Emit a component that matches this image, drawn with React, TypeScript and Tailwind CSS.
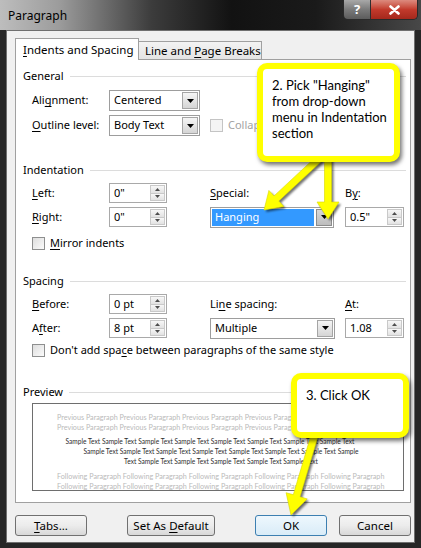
import React from "react";

function U({ c }: { c: string }) {
  return <span className="underline decoration-1 underline-offset-[2px]">{c}</span>;
}

function DownTri({ color = "#000" }: { color?: string }) {
  return (
    <svg width="7" height="4" viewBox="0 0 7 4">
      <polygon points="0,0 7,0 3.5,4" fill={color} />
    </svg>
  );
}

function SmallTri({ up }: { up?: boolean }) {
  return (
    <svg width="5" height="3" viewBox="0 0 5 3">
      <polygon points={up ? "0,3 5,3 2.5,0" : "0,0 5,0 2.5,3"} fill="#4d4d4d" />
    </svg>
  );
}

function Select({ value, w, highlighted }: { value: string; w: string; highlighted?: boolean }) {
  return (
    <div className={`flex h-[21px] items-stretch border border-[#9d9d9d] bg-white ${w}`}>
      {highlighted ? (
        <div className="m-[1px] flex flex-1 items-center bg-[#3399ff] pl-[3px] text-white">{value}</div>
      ) : (
        <div className="flex flex-1 items-center pl-[4px]">{value}</div>
      )}
      <div
        className={`m-[1px] flex w-[16px] items-center justify-center border ${
          highlighted
            ? "border-[#8c8c8c] bg-gradient-to-b from-[#d8d8d8] to-[#bdbdbd]"
            : "border-[#a5a5a5] bg-gradient-to-b from-[#f5f5f5] to-[#d5d5d5]"
        }`}
      >
        <DownTri />
      </div>
    </div>
  );
}

function Spin({ value, w }: { value: string; w: string }) {
  return (
    <div className={`flex h-[20px] items-stretch border border-[#a9a9a9] bg-white ${w}`}>
      <div className="flex flex-1 items-center pl-[4px]">{value}</div>
      <div className="my-[1px] mr-[1px] flex w-[15px] flex-col">
        <div className="flex flex-1 items-center justify-center border border-[#c9c9c9] bg-gradient-to-b from-[#f7f7f7] to-[#e2e2e2]">
          <SmallTri up />
        </div>
        <div className="flex flex-1 items-center justify-center border border-t-0 border-[#c9c9c9] bg-gradient-to-b from-[#f7f7f7] to-[#e2e2e2]">
          <SmallTri />
        </div>
      </div>
    </div>
  );
}

function Check({ disabled }: { disabled?: boolean }) {
  return (
    <div
      className={`h-[13px] w-[13px] border ${
        disabled ? "border-[#c4c4c4] bg-[#f4f4f4]" : "border-[#8e8f8f] bg-gradient-to-br from-[#dedede] to-[#fbfbfb]"
      }`}
    />
  );
}

function Heading({ children }: { children: React.ReactNode }) {
  return (
    <div className="flex h-[15px] items-center pl-[7px] pr-[4px]">
      <span className="whitespace-nowrap">{children}</span>
      <div className="ml-[6px] h-px flex-1 bg-[#dcdcdc]" />
    </div>
  );
}

function Btn({ children, w, primary }: { children: React.ReactNode; w: string; primary?: boolean }) {
  return (
    <div
      className={`flex h-[21px] items-center justify-center whitespace-nowrap rounded-[3px] border ${w} ${
        primary
          ? "border-[#3c7fb1] bg-gradient-to-b from-[#eef7fd] to-[#d9ecf8]"
          : "border-[#707070] bg-gradient-to-b from-[#f5f5f5] via-[#ececec] to-[#d8d8d8]"
      }`}
    >
      {children}
    </div>
  );
}

function arrowPts(x1: number, y1: number, x2: number, y2: number, w: number, hl: number, hw: number) {
  const dx = x2 - x1;
  const dy = y2 - y1;
  const L = Math.hypot(dx, dy);
  const ux = dx / L;
  const uy = dy / L;
  const px = -uy;
  const py = ux;
  const bx = x2 - ux * hl;
  const by = y2 - uy * hl;
  const pts = [
    [x1 + (px * w) / 2, y1 + (py * w) / 2],
    [bx + (px * w) / 2, by + (py * w) / 2],
    [bx + (px * hw) / 2, by + (py * hw) / 2],
    [x2, y2],
    [bx - (px * hw) / 2, by - (py * hw) / 2],
    [bx - (px * w) / 2, by - (py * w) / 2],
    [x1 - (px * w) / 2, y1 - (py * w) / 2],
  ];
  return pts.map((p) => `${p[0].toFixed(1)},${p[1].toFixed(1)}`).join(" ");
}

const ARROWS = [
  arrowPts(322, 156, 264, 210, 7, 17, 22),
  arrowPts(328, 156, 328, 219, 7, 17, 22),
  arrowPts(315, 434, 291, 515, 7, 20, 22),
];

export default function App() {
  const prev = "Previous Paragraph Previous Paragraph Previous Paragraph Previous Paragraph Previous Paragraph";
  const foll = "Following Paragraph Following Paragraph Following Paragraph Following Paragraph Following Paragraph";
  return (
    <div className="relative flex h-[548px] w-[421px] flex-col overflow-hidden bg-[#262626] font-['Noto_Sans',sans-serif] text-[11px] text-black">
      {/* Title bar */}
      <div className="flex h-[30px] items-start bg-[linear-gradient(to_right,#bdbdbd_0%,#9c9c9c_14%,#3c3c3c_36%,#121212_55%,#1a1a1a_75%,#484848_100%)]">
        <div className="pl-[8px] pt-[7px] text-[12px] text-black">Paragraph</div>
        <div className="ml-auto mr-[3px] flex h-[20px] rounded-b-[5px] border border-t-0 border-[#2a2a2a]">
          <div className="flex w-[27px] items-center justify-center rounded-bl-[4px] border-r border-[#2e2e2e] bg-gradient-to-b from-[#a8a8a8] via-[#7a7a7a] to-[#5c5c5c] text-[13px] font-bold text-white">
            ?
          </div>
          <div className="flex w-[46px] items-center justify-center rounded-br-[4px] bg-gradient-to-b from-[#dc8a7e] via-[#c23a2c] to-[#a5281c]">
            <svg width="11" height="10" viewBox="0 0 11 10">
              <path d="M1.5 1.5 L9.5 8.5 M9.5 1.5 L1.5 8.5" stroke="#fff" strokeWidth="2.6" strokeLinecap="round" />
            </svg>
          </div>
        </div>
      </div>

      {/* Client area */}
      <div className="mx-[6px] mb-[5px] flex flex-1 flex-col border border-[#6f6f6f] bg-[#f0f0f0] pl-[8px] pr-[3px] pt-[7px]">
        {/* Tabs */}
        <div className="flex h-[21px] items-end">
          <div className="relative z-10 -mb-px flex h-[22px] w-[124px] items-center whitespace-nowrap border border-b-0 border-[#a0a0a0] bg-white pl-[7px] text-[11.5px]">
            <span>
              <U c="I" />ndents and Spacing
            </span>
          </div>
          <div className="flex h-[18px] w-[123px] items-center whitespace-nowrap border border-b-0 border-l-0 border-[#a0a0a0] bg-gradient-to-b from-[#f3f3f3] to-[#e4e4e4] pl-[6px] text-[11.5px]">
            <span>
              Line and <U c="P" />age Breaks
            </span>
          </div>
        </div>

        {/* Panel */}
        <div className="flex h-[444px] flex-col border border-[#a0a0a0] bg-white">
          <div className="mt-[9px]">
            <Heading>General</Heading>
          </div>
          <div className="mt-[6px] flex h-[21px] items-center whitespace-nowrap pl-[16px]">
            <div className="w-[77px]">
              Ali<U c="g" />nment:
            </div>
            <Select value="Centered" w="w-[91px]" />
          </div>
          <div className="mt-[4px] flex h-[21px] items-center whitespace-nowrap pl-[16px]">
            <div className="w-[77px]">
              <U c="O" />utline level:
            </div>
            <div className="w-[101px]">
              <Select value="Body Text" w="w-[91px]" />
            </div>
            <Check disabled />
            <span className="ml-[5px] text-[#a3a3a3]">Collapsed by default</span>
          </div>

          <div className="mt-[27px]">
            <Heading>Indentation</Heading>
          </div>
          <div className="mt-[5px] flex h-[20px] items-center whitespace-nowrap pl-[16px]">
            <div className="w-[77px]">
              <U c="L" />eft:
            </div>
            <div className="w-[101px]">
              <Spin value={'0"'} w="w-[58px]" />
            </div>
            <div className="w-[135px]">
              <U c="S" />pecial:
            </div>
            <div>
              B<U c="y" />:
            </div>
          </div>
          <div className="mt-[4px] flex h-[20px] items-center whitespace-nowrap pl-[16px]">
            <div className="w-[77px]">
              <U c="R" />ight:
            </div>
            <div className="w-[101px]">
              <Spin value={'0"'} w="w-[58px]" />
            </div>
            <div className="w-[135px]">
              <Select value="Hanging" w="w-[124px]" highlighted />
            </div>
            <Spin value={'0.5"'} w="w-[59px]" />
          </div>
          <div className="mt-[8px] flex h-[16px] items-center whitespace-nowrap pl-[16px]">
            <Check />
            <span className="ml-[5px]">
              <U c="M" />irror indents
            </span>
          </div>

          <div className="mt-[23px]">
            <Heading>Spacing</Heading>
          </div>
          <div className="mt-[5px] flex h-[20px] items-center whitespace-nowrap pl-[16px]">
            <div className="w-[77px]">
              <U c="B" />efore:
            </div>
            <div className="w-[101px]">
              <Spin value="0 pt" w="w-[58px]" />
            </div>
            <div className="w-[135px]">
              Li<U c="n" />e spacing:
            </div>
            <div>
              <U c="A" />t:
            </div>
          </div>
          <div className="mt-[4px] flex h-[20px] items-center whitespace-nowrap pl-[16px]">
            <div className="w-[77px]">
              A<U c="f" />ter:
            </div>
            <div className="w-[101px]">
              <Spin value="8 pt" w="w-[58px]" />
            </div>
            <div className="w-[135px]">
              <Select value="Multiple" w="w-[125px]" />
            </div>
            <Spin value="1.08" w="w-[59px]" />
          </div>
          <div className="mt-[4px] flex h-[16px] items-center whitespace-nowrap pl-[16px]">
            <Check />
            <span className="ml-[5px]">
              Don't add spa<U c="c" />e between paragraphs of the same style
            </span>
          </div>

          <div className="mt-[27px]">
            <Heading>Preview</Heading>
          </div>
          <div className="ml-[16px] mt-[3px] h-[88px] w-[372px] overflow-hidden border border-[#6e6e6e] bg-white font-['Lato',sans-serif] text-[6.6px] leading-[10px]">
            <div className="mt-[9px] whitespace-nowrap pl-[24px] text-[7.2px] text-[#bababa]">{prev}</div>
            <div className="whitespace-nowrap pl-[24px] text-[7.2px] text-[#bababa]">{prev}</div>
            <div className="mt-[3px] whitespace-nowrap pl-[24px] pr-[40px] text-center text-[#2e2e2e]">
              Sample Text Sample Text Sample Text Sample Text Sample Text Sample Text Sample Text Sample Text
            </div>
            <div className="whitespace-nowrap pl-[16px] pr-[10px] text-center text-[#2e2e2e]">
              Sample Text Sample Text Sample Text Sample Text Sample Text Sample Text Sample Text Sample
            </div>
            <div className="whitespace-nowrap pl-[16px] pr-[10px] text-center text-[#2e2e2e]">
              Text Sample Text Sample Text Sample Text Sample Text Sample Text
            </div>
            <div className="mt-[6px] whitespace-nowrap pl-[24px] text-[7.2px] text-[#bababa]">{foll}</div>
            <div className="whitespace-nowrap pl-[24px] text-[7.2px] text-[#bababa]">{foll}</div>
          </div>
        </div>

        {/* Buttons */}
        <div className="mt-[12px] flex text-[11.5px]">
          <Btn w="w-[72px]">
            <span>
              <U c="T" />abs...
            </span>
          </Btn>
          <div className="ml-[40px]">
            <Btn w="w-[88px]">
              <span>
                Set As <U c="D" />efault
              </span>
            </Btn>
          </div>
          <div className="ml-[40px]">
            <Btn w="w-[72px]" primary>
              OK
            </Btn>
          </div>
          <div className="ml-[12px]">
            <Btn w="w-[72px]">Cancel</Btn>
          </div>
        </div>
      </div>

      {/* Annotation arrows */}
      <svg className="pointer-events-none absolute left-0 top-0" width="421" height="548" viewBox="0 0 421 548">
        <defs>
          <filter id="blur" x="-20%" y="-20%" width="140%" height="140%">
            <feGaussianBlur stdDeviation="1.2" />
          </filter>
        </defs>
        {ARROWS.map((p, i) => (
          <g key={i}>
            <polygon points={p} fill="rgba(0,0,0,0.55)" transform="translate(2,2)" filter="url(#blur)" />
            <polygon points={p} fill="#ffff00" stroke="#d9d900" strokeWidth="0.6" />
          </g>
        ))}
      </svg>

      {/* Callout 1 */}
      <div className="absolute left-[257px] top-[63px] h-[99px] w-[143px] rounded-[10px] border-[6px] border-[#ffff00] bg-white pl-[9px] pt-[8px] font-['Lato',sans-serif] text-[13px] leading-[16px] text-black shadow-[2px_3px_4px_rgba(0,0,0,0.55)]">
        <div>2. Pick "Hanging"</div>
        <div>from drop-down</div>
        <div>menu in Indentation</div>
        <div>section</div>
      </div>

      {/* Callout 2 */}
      <div className="absolute left-[291px] top-[373px] h-[65px] w-[118px] rounded-[10px] border-[6px] border-[#ffff00] bg-white pl-[9px] pt-[8px] font-['Lato',sans-serif] text-[13px] leading-[16px] text-black shadow-[2px_3px_4px_rgba(0,0,0,0.55)]">
        3. Click OK
      </div>
    </div>
  );
}
